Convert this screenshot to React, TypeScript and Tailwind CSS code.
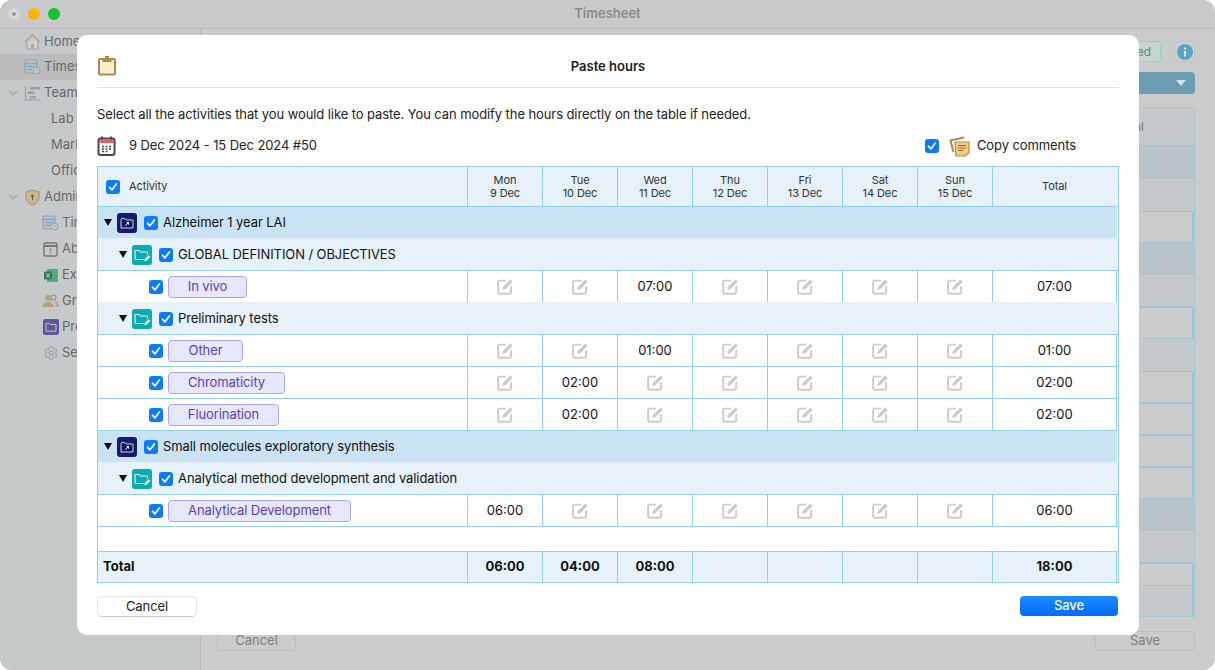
import type { ReactNode } from "react"
import { Settings } from "lucide-react"

const font = "font-['Inter','Liberation_Sans',sans-serif]"
const line = "border-[#93d0f0]"

function Check({ className = "" }: { className?: string }) {
  return (
    <span className={`flex h-[14px] w-[14px] shrink-0 items-center justify-center rounded-[3px] bg-[#0a7aff] ${className}`}>
      <svg width="10" height="10" viewBox="0 0 10 10" fill="none">
        <path d="M1.6 5.3 L4 7.8 L8.4 2" stroke="white" strokeWidth="1.8" strokeLinecap="round" strokeLinejoin="round" />
      </svg>
    </span>
  )
}

function Arrow() {
  return (
    <svg width="8" height="7" viewBox="0 0 8 7" className="shrink-0">
      <path d="M0 0 H8 L4 7 Z" fill="#111" />
    </svg>
  )
}

function ProjectIcon() {
  return (
    <span className="flex h-5 w-5 shrink-0 items-center justify-center rounded-[3px] bg-[#141a66]">
      <svg width="14" height="12" viewBox="0 0 14 12" fill="none">
        <path d="M1 2 V11 H13 V3 H6 L5 1.500 H1.500 Z" stroke="#c5d3ee" strokeWidth="1" />
        <path d="M5.500 8.500 L8.500 5.500 M6.500 5.500 H8.500 V7.500" stroke="#fff" strokeWidth="1" />
      </svg>
    </span>
  )
}

function PhaseIcon() {
  return (
    <span className="flex h-5 w-5 shrink-0 items-center justify-center rounded-[3px] bg-[#0caab2]">
      <svg width="17" height="14" viewBox="0 0 17 14" fill="none">
        <path d="M10 11.500 H2.500 C1.700 11.500 1 10.800 1 10 V2.500 H5.200 L6.400 4 H13.500 V7" stroke="#e4f6f7" strokeWidth="1.100" />
        <path d="M10.300 13.300 L10.800 11 L14.600 7.300 L16.300 9 L12.500 12.800 Z" fill="#fff" />
      </svg>
    </span>
  )
}

function EditIcon() {
  return (
    <svg width="17" height="17" viewBox="0 0 16 16" fill="none">
      <path d="M8.500 2.500 H2.800 C1.800 2.500 1 3.300 1 4.300 V13 C1 14 1.800 14.800 2.800 14.800 H11.500 C12.500 14.800 13.300 14 13.300 13 V7.500" stroke="#cbcbcb" strokeWidth="1.800" />
      <path d="M5.500 8.500 L12.500 1.300 L14.800 3.500 L7.700 10.700 L5 11.200 Z" fill="#cbcbcb" />
    </svg>
  )
}

function ClipboardIcon() {
  return (
    <svg width="20" height="21" viewBox="0 0 20 21" fill="none">
      <rect x="2" y="4" width="16" height="15.500" rx="1" fill="#fdeecb" stroke="#ad8a4b" strokeWidth="2" />
      <path d="M5.500 7 V3.200 H8 V1 H12 V3.200 H14.500 V7 Z" fill="#ad8a4b" />
    </svg>
  )
}

function CalendarIcon() {
  return (
    <svg width="19" height="20" viewBox="0 0 19 20" fill="none">
      <rect x="1.500" y="2.500" width="16" height="16.500" rx="2" fill="#fff" stroke="#48484c" strokeWidth="2" />
      <rect x="2.500" y="3.500" width="14" height="3.500" fill="#e05a5e" />
      <rect x="4" y="0.500" width="2" height="3" fill="#48484c" />
      <rect x="13" y="0.500" width="2" height="3" fill="#48484c" />
      <path d="M5 10.500 H7 M8.500 10.500 H10.500 M12 10.500 H14 M5 13 H7 M8.500 13 H10.500 M12 13 H14 M5 15.500 H7 M8.500 15.500 H10.500" stroke="#48484c" strokeWidth="1.400" />
    </svg>
  )
}

function CommentsIcon() {
  return (
    <svg width="21" height="21" viewBox="0 0 21 21" fill="none">
      <path d="M4.500 16 L1.500 4.500 L15 1.500" stroke="#ad8a4b" strokeWidth="2" />
      <path d="M6 6 H20 V16.500 L16.500 20 H7 Z" fill="#f3cb86" stroke="#ad8a4b" strokeWidth="1.200" />
      <path d="M9 9.500 H17 M9 12 H17 M9 14.500 H14" stroke="#8f6b2e" strokeWidth="1.200" />
    </svg>
  )
}

// sidebar icons, drawn dim because the dialog overlay sits on top of them
function HomeIcon() {
  return (
    <svg width="17" height="16" viewBox="0 0 17 16" fill="none">
      <path d="M3 7 V15 H14 V7" fill="#cfd3d4" stroke="#94a7b8" strokeWidth="1.200" />
      <rect x="7" y="9.500" width="3" height="5" fill="#d3a482" />
      <path d="M1 8 L8.500 1 L16 8" stroke="#c39a94" strokeWidth="1.500" />
    </svg>
  )
}

function SheetIcon() {
  return (
    <svg width="17" height="16" viewBox="0 0 17 16" fill="none">
      <rect x="1" y="1" width="12" height="13" rx="1" fill="#b4c3cf" stroke="#8ea3b6" strokeWidth="1.200" />
      <path d="M1 4.500 H13 M3 7.500 H11 M3 10.500 H8" stroke="#8ea3b6" strokeWidth="1.300" />
      <circle cx="12.500" cy="11.500" r="3.500" fill="#c6c9c9" stroke="#8ea3b6" />
      <path d="M12.500 9.800 V11.500 H14" stroke="#8ea3b6" strokeWidth="0.800" />
    </svg>
  )
}

function TeamIcon() {
  return (
    <svg width="17" height="16" viewBox="0 0 17 16" fill="none">
      <path d="M1.500 1 V15 H16" stroke="#8ea3b6" strokeWidth="1.200" />
      <rect x="6" y="2" width="10" height="2.500" fill="#8ea3b6" />
      <rect x="3.500" y="6.500" width="7" height="2.500" fill="#b59c77" />
      <rect x="6" y="11" width="6" height="2.500" fill="#8ea3b6" />
    </svg>
  )
}

function ShieldIcon() {
  return (
    <svg width="15" height="17" viewBox="0 0 15 17" fill="none">
      <path d="M7.500 1 L14 3 V8.500 C14 12 11 15 7.500 16 C4 15 1 12 1 8.500 V3 Z" fill="#c9b98f" stroke="#a99a78" strokeWidth="1.200" />
      <circle cx="7.500" cy="7" r="1.500" fill="#6e6650" />
      <rect x="7" y="7.500" width="1" height="3.500" fill="#6e6650" />
    </svg>
  )
}

function AbsenceIcon() {
  return (
    <svg width="15" height="16" viewBox="0 0 15 16" fill="none">
      <rect x="1" y="2" width="13" height="13" rx="1.500" stroke="#77777a" strokeWidth="1.400" />
      <path d="M1 5 H14" stroke="#77777a" strokeWidth="1.800" />
      <path d="M7.500 7 V10.500 M7.500 11.500 V13" stroke="#bd7f80" strokeWidth="1.500" />
    </svg>
  )
}

function ExcelIcon() {
  return (
    <svg width="16" height="15" viewBox="0 0 16 15" fill="none">
      <rect x="4" y="1" width="11" height="13" rx="1" fill="#5aa582" />
      <rect x="1" y="3.500" width="8" height="8" rx="1" fill="#2f7d5c" />
      <path d="M3.500 5.500 L6.500 9.500 M6.500 5.500 L3.500 9.500" stroke="#d9e4df" strokeWidth="0.900" />
    </svg>
  )
}

function GroupsIcon() {
  return (
    <svg width="17" height="14" viewBox="0 0 17 14" fill="none">
      <circle cx="11.500" cy="3.500" r="2.500" stroke="#97938c" strokeWidth="1.200" />
      <circle cx="6" cy="4" r="3" fill="#b6a184" />
      <path d="M0.500 13 C0.500 9.500 3 8 6 8 C9 8 11.500 9.500 11.500 13 Z" fill="#b6a184" />
      <path d="M12.500 8 C14.500 8 16 9.500 16 12 H13" stroke="#97938c" strokeWidth="1.200" />
    </svg>
  )
}

function FolderIcon() {
  return (
    <span className="flex h-4 w-4 items-center justify-center rounded-[2px] bg-[#5a5a96]">
      <svg width="12" height="10" viewBox="0 0 14 12" fill="none">
        <path d="M1 2 V11 H13 V3 H6 L5 1.500 H1.500 Z" stroke="#c2c5cf" strokeWidth="1.200" />
      </svg>
    </span>
  )
}

function Tag({ label, w }: { label: string; w: string }) {
  return (
    <span className={`flex h-[22px] items-center justify-center rounded-[4px] border border-[#a9a4f5] bg-[#e6e9fd] text-[13px] text-[#5b3cc4] ${w}`}>
      {label}
    </span>
  )
}

type Row =
  | { kind: "project"; label: string }
  | { kind: "phase"; label: string }
  | { kind: "task"; label: string; w: string; days: string[]; total: string }

const rows: Row[] = [
  { kind: "project", label: "Alzheimer 1 year LAI" },
  { kind: "phase", label: "GLOBAL DEFINITION / OBJECTIVES" },
  { kind: "task", label: "In vivo", w: "w-[79px]", days: ["", "", "07:00", "", "", "", ""], total: "07:00" },
  { kind: "phase", label: "Preliminary tests" },
  { kind: "task", label: "Other", w: "w-[75px]", days: ["", "", "01:00", "", "", "", ""], total: "01:00" },
  { kind: "task", label: "Chromaticity", w: "w-[117px]", days: ["", "02:00", "", "", "", "", ""], total: "02:00" },
  { kind: "task", label: "Fluorination", w: "w-[111px]", days: ["", "02:00", "", "", "", "", ""], total: "02:00" },
  { kind: "project", label: "Small molecules exploratory synthesis" },
  { kind: "phase", label: "Analytical method development and validation" },
  { kind: "task", label: "Analytical Development", w: "w-[183px]", days: ["06:00", "", "", "", "", "", ""], total: "06:00" },
]

const headers = [
  ["Mon", "9 Dec"],
  ["Tue", "10 Dec"],
  ["Wed", "11 Dec"],
  ["Thu", "12 Dec"],
  ["Fri", "13 Dec"],
  ["Sat", "14 Dec"],
  ["Sun", "15 Dec"],
]

const footer = ["06:00", "04:00", "08:00", "", "", "", ""]
const cols = "grid grid-cols-[369px_repeat(7,75px)_124px_3px]"

function TableRow({ row }: { row: Row }) {
  if (row.kind === "project") {
    return (
      <div className={`mr-[1px] flex h-8 items-center border-t ${line} bg-[#c9e3f5] pl-[6px] text-[13px] text-[#111]`}>
        <Arrow />
        <span className="ml-[5px]"><ProjectIcon /></span>
        <Check className="ml-[7px] mr-[5px]" />
        {row.label}
      </div>
    )
  }
  if (row.kind === "phase") {
    return (
      <div className="flex h-8 items-center bg-[#e6f1fa] pl-[21px] pt-px text-[13px] text-[#111]">
        <Arrow />
        <span className="ml-[5px]"><PhaseIcon /></span>
        <Check className="ml-[7px] mr-[5px]" />
        {row.label}
      </div>
    )
  }
  return (
    <div className={`${cols} h-8 border-t ${line} bg-white text-[13px] text-[#111]`}>
      <div className="flex items-center pl-[51px]">
        <Check className="mr-[5px]" />
        <Tag label={row.label} w={row.w} />
      </div>
      {row.days.map((d, i) => (
        <div key={i} className={`flex items-center justify-center border-l ${line} tracking-normal`}>
          {d || <EditIcon />}
        </div>
      ))}
      <div className={`flex items-center justify-center border-l ${line} tracking-normal`}>{row.total}</div>
      <div className={`border-l ${line}`} />
    </div>
  )
}

function SideItem({ label, indent, height = "h-[26px]", active, chevron, icon }: { label: string; indent: string; height?: string; active?: boolean; chevron?: boolean; icon?: ReactNode }) {
  return (
    <div className={`flex items-center text-[13px] text-[#66686a] ${height} ${indent} ${active ? "bg-[#bbbbbb]" : ""}`}>
      {chevron && (
        <svg width="10" height="6" viewBox="0 0 10 6" fill="none" className="-ml-[16px] mr-[6px]">
          <path d="M1 1 L5 5 L9 1" stroke="#a0a3a4" strokeWidth="1.200" />
        </svg>
      )}
      {icon && <span className="mr-[3px] flex w-[17px] shrink-0 items-center justify-center">{icon}</span>}
      {label}
    </div>
  )
}

export default function App() {
  // rows of the table behind the dialog, top to bottom
  const plain = "bg-[#c4c9cb]"
  const blue = "bg-[#b8c4ca]"
  const box = "border-t border-r-2 border-b"
  const backRows = [
    `h-[33px] ${blue}`, `h-[32px] ${plain}`, `h-[32px] ${box}`, `h-[32px] ${blue}`,
    `h-[32px] ${plain} border-b`, `h-[32px] ${box}`, `h-[32px] ${plain}`,
    `h-[32px] ${box}`, `h-[32px] ${box}`, `h-[32px] ${box}`, `h-[32px] ${box}`,
    `h-[32px] ${blue}`, `h-[32px] ${plain} border-b`, `h-[23px] ${box}`, `flex-1 ${plain} border-r-2`,
  ]

  return (
    <div className={`relative h-[670px] w-[1215px] overflow-hidden bg-white ${font}`}>
      <div className="flex h-full flex-col overflow-hidden rounded-[12px] bg-[#cbcbcb]">
        <div className="relative flex h-[29px] shrink-0 items-center justify-center border-b border-[#bcbcbc] bg-[#c9c9cb] text-[13px] font-semibold text-[#8b8b8b]">
          <div className="absolute left-[8px] top-[8px] flex gap-[8px]">
            <span className="flex h-3 w-3 items-center justify-center rounded-full bg-[#d8d8dc]">
              <span className="h-1 w-1 rounded-full bg-[#9a9a9e]" />
            </span>
            <span className="h-3 w-3 rounded-full bg-[#fcb400]" />
            <span className="h-3 w-3 rounded-full bg-[#10c52c]" />
          </div>
          Timesheet
        </div>
        <div className="flex min-h-0 flex-1">
          <div className="w-[201px] shrink-0 border-r border-[#b8b8b8] bg-[#c6c9c9]">
            <SideItem label="Home" indent="pl-[24px]" height="h-[25px]" icon={<HomeIcon />} />
            <SideItem label="Timesheet" indent="pl-[24px]" active icon={<SheetIcon />} />
            <SideItem label="Team" indent="pl-[24px]" chevron icon={<TeamIcon />} />
            <SideItem label="Lab" indent="pl-[51px]" />
            <SideItem label="Marketing" indent="pl-[51px]" />
            <SideItem label="Office" indent="pl-[51px]" />
            <SideItem label="Admin" indent="pl-[24px]" chevron icon={<ShieldIcon />} />
            <SideItem label="Timesheet" indent="pl-[42px]" icon={<SheetIcon />} />
            <SideItem label="Absences" indent="pl-[42px]" icon={<AbsenceIcon />} />
            <SideItem label="Export" indent="pl-[42px]" icon={<ExcelIcon />} />
            <SideItem label="Groups" indent="pl-[42px]" icon={<GroupsIcon />} />
            <SideItem label="Projects" indent="pl-[42px]" icon={<FolderIcon />} />
            <SideItem label="Settings" indent="pl-[42px]" icon={<Settings size={16} color="#97a9b6" />} />
          </div>
          <div className="flex min-w-0 flex-1 flex-col pl-[16px] pr-[20px] pt-[12px] pb-[19px]">
            <div className="flex h-[21px] items-center justify-end gap-[13px]">
              <span className="flex h-[21px] w-[61px] items-center justify-end rounded-[4px] border border-[#8fd4b4] bg-[#c5d8d0] pr-[9px] text-[12px] text-[#5e8a78]">
                Saved
              </span>
              <span className="flex h-[21px] w-[21px] items-center justify-center rounded-[5px] border border-[#c2c2c2] bg-[#cfcfcf]">
                <svg width="16" height="16" viewBox="0 0 16 16">
                  <circle cx="8" cy="8" r="8" fill="#5aa5c7" />
                  <rect x="7" y="7" width="2" height="5.500" fill="#d8e8ef" />
                  <rect x="7" y="3.500" width="2" height="2" fill="#d8e8ef" />
                </svg>
              </span>
            </div>
            <div className="mt-[10px] flex h-[22px] items-center justify-end rounded-[4px] bg-[#6b9db3] pr-[9px]">
              <svg width="10" height="6" viewBox="0 0 10 6"><path d="M0 0 H10 L5 6 Z" fill="#d5e3ea" /></svg>
            </div>
            <div className="mt-[13px] flex h-[510px] flex-col border border-[#a3c4d4]">
              <div className={`flex h-[38px] shrink-0 items-center justify-end border-b border-[#a3c4d4] bg-[#c4c9cb] pr-[50px] text-[12px] text-[#7a7a7a]`}>Total</div>
              {backRows.map((r, i) => (
                <div key={i} className={`shrink-0 border-[#a3c4d4] ${r}`} />
              ))}
            </div>
            <div className="mt-[14px] flex items-center justify-between">
              <span className="flex h-[20px] w-[79px] items-center justify-center rounded-[4px] border border-[#bdbdbd] text-[13px] text-[#808080]">Cancel</span>
              <span className="flex h-[20px] w-[100px] items-center justify-center rounded-[4px] border border-[#bdbdbd] text-[13px] text-[#808080]">Save</span>
            </div>
          </div>
        </div>
      </div>

      <div className="absolute left-[77px] top-[35px] flex h-[600px] w-[1062px] flex-col rounded-[10px] bg-white px-[20px] tracking-[-0.09px] text-[#222]">
        <div className="relative flex h-[53px] shrink-0 items-center justify-center border-b border-[#e2e2e2] text-[13px] font-semibold tracking-normal">
          <span className="absolute left-0 top-[20px]"><ClipboardIcon /></span>
          <span className="mt-[12px]">Paste hours</span>
        </div>
        <p className="mt-[17px] text-[13px] leading-[18px]">
          Select all the activities that you would like to paste. You can modify the hours directly on the table if needed.
        </p>
        <div className="mt-[12px] flex h-[22px] items-center text-[13px]">
          <CalendarIcon />
          <span className="ml-[13px]">9 Dec 2024 - 15 Dec 2024 #50</span>
          <span className="ml-auto mr-[43px] flex items-center">
            <Check className="mr-[10px]" />
            <CommentsIcon />
            <span className="ml-[7px]">Copy comments</span>
          </span>
        </div>

        <div className={`mt-[9px] w-[1022px] border ${line} text-[#111]`}>
          <div className="grid h-[39px] grid-cols-[369px_repeat(7,75px)_1fr] bg-[#e6f1fa] text-[11px] leading-[13px] text-[#333]">
            <div className="flex items-center pl-[8px]">
              <Check className="mr-[9px]" />
              Activity
            </div>
            {headers.map(([d, n]) => (
              <div key={d} className={`flex flex-col items-center justify-center border-l ${line}`}>
                <span>{d}</span>
                <span>{n}</span>
              </div>
            ))}
            <div className={`flex items-center justify-center border-l ${line} pr-[2px]`}>Total</div>
          </div>
          {rows.map((r, i) => (
            <TableRow key={i} row={r} />
          ))}
          <div className={`h-[25px] border-t ${line} bg-white`} />
          <div className={`${cols} h-[31px] border-t ${line} bg-[#e6f1fa] text-[13px] font-bold tracking-normal`}>
            <div className="flex items-center pl-[5px]">Total</div>
            {footer.map((d, i) => (
              <div key={i} className={`flex items-center justify-center border-l ${line}`}>{d}</div>
            ))}
            <div className={`flex items-center justify-center border-l ${line}`}>18:00</div>
            <div className={`border-l ${line}`} />
          </div>
        </div>

        <div className="mt-[13px] flex items-start justify-between">
          <button className="h-[21px] w-[100px] rounded-[5px] border border-[#e4e4e4] border-b-[#c8c8c8] bg-white text-[13px] leading-[17px] text-[#222]">Cancel</button>
          <button className="mr-px h-[20px] w-[98px] rounded-[4px] bg-gradient-to-b from-[#1a8cff] to-[#0a68ff] text-[13px] font-medium text-white">Save</button>
        </div>
      </div>
    </div>
  )
}
